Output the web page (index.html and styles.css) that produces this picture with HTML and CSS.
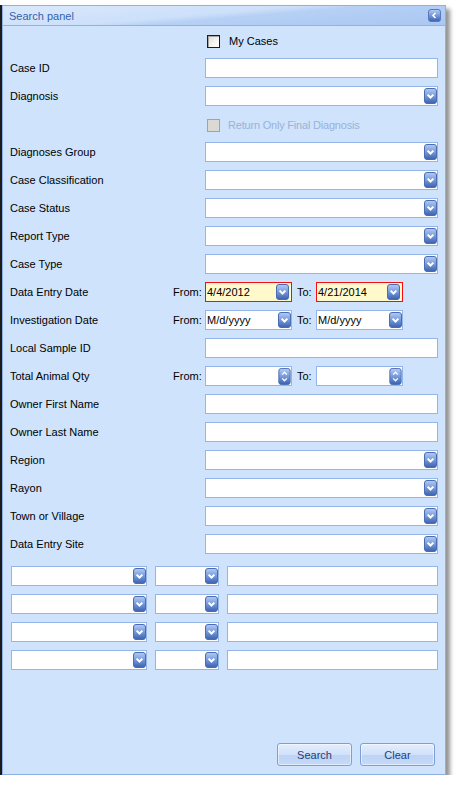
FILE: index.html
```html
<!DOCTYPE html>
<html>
<head>
<meta charset="utf-8">
<link rel="stylesheet" href="styles.css">
</head>
<body>
<svg class="defs" width="0" height="0" aria-hidden="true">
  <defs>
    <linearGradient id="btng" x1="0" y1="0" x2="0" y2="1">
      <stop offset="0" stop-color="#b4cbf3"/>
      <stop offset="0.45" stop-color="#7d9fdf"/>
      <stop offset="1" stop-color="#3a60b0"/>
    </linearGradient>
    <symbol id="dd" viewBox="0 0 13 16">
      <rect x="0.5" y="0.5" width="12" height="15" rx="2.5" fill="url(#btng)" stroke="#4a6cb0"/>
      <path d="M3.6 6.6l2.9 2.9 2.9-2.9" stroke="#fff" stroke-width="2" fill="none"/>
    </symbol>
    <symbol id="spin" viewBox="0 0 13 18">
      <rect x="0.5" y="0.5" width="12" height="17" rx="2.5" fill="url(#btng)" stroke="#4a6cb0"/>
      <path d="M4 7l2.5-2.5 2.5 2.5" stroke="#fff" stroke-width="1.4" fill="none"/>
      <path d="M4 11l2.5 2.5 2.5-2.5" stroke="#fff" stroke-width="1.4" fill="none"/>
    </symbol>
  </defs>
</svg>
<div class="frame">
  <div class="panel">
    <div class="header">
      <span class="title">Search panel</span>
      <svg class="collapse" width="13" height="13" viewBox="0 0 13 13">
        <rect x="0.5" y="0.5" width="12" height="12" rx="2.5" fill="url(#btng)" stroke="#5878b8"/>
        <path d="M7.5 4l-2.5 2.5 2.5 2.5" stroke="#fff" stroke-width="1.6" fill="none"/>
      </svg>
    </div>
    <div class="body">
      <div class="rows">
        <div class="row">
          <span class="lbl"></span>
          <div class="check"><span class="box"></span><span>My Cases</span></div>
        </div>
        <div class="row"><span class="lbl">Case ID</span><div class="txt"></div></div>
        <div class="row"><span class="lbl">Diagnosis</span><div class="combo"><svg class="dd"><use href="#dd"/></svg></div></div>
        <div class="row">
          <span class="lbl"></span>
          <div class="check disabled"><span class="box"></span><span>Return Only Final Diagnosis</span></div>
        </div>
        <div class="row"><span class="lbl">Diagnoses Group</span><div class="combo"><svg class="dd"><use href="#dd"/></svg></div></div>
        <div class="row"><span class="lbl">Case Classification</span><div class="combo"><svg class="dd"><use href="#dd"/></svg></div></div>
        <div class="row"><span class="lbl">Case Status</span><div class="combo"><svg class="dd"><use href="#dd"/></svg></div></div>
        <div class="row"><span class="lbl">Report Type</span><div class="combo"><svg class="dd"><use href="#dd"/></svg></div></div>
        <div class="row"><span class="lbl">Case Type</span><div class="combo"><svg class="dd"><use href="#dd"/></svg></div></div>
        <div class="row">
          <span class="lbl short">Data Entry Date</span>
          <span class="from">From:</span>
          <div class="combo small invalid"><span class="val">4/4/2012</span><svg class="dd"><use href="#dd"/></svg></div>
          <span class="to">To:</span>
          <div class="combo small invalid"><span class="val">4/21/2014</span><svg class="dd"><use href="#dd"/></svg></div>
        </div>
        <div class="row">
          <span class="lbl short">Investigation Date</span>
          <span class="from">From:</span>
          <div class="combo small"><span class="val">M/d/yyyy</span><svg class="dd"><use href="#dd"/></svg></div>
          <span class="to">To:</span>
          <div class="combo small"><span class="val">M/d/yyyy</span><svg class="dd"><use href="#dd"/></svg></div>
        </div>
        <div class="row"><span class="lbl">Local Sample ID</span><div class="txt"></div></div>
        <div class="row">
          <span class="lbl short">Total Animal Qty</span>
          <span class="from">From:</span>
          <div class="combo small"><span class="val"></span><svg class="sp"><use href="#spin"/></svg></div>
          <span class="to">To:</span>
          <div class="combo small"><span class="val"></span><svg class="sp"><use href="#spin"/></svg></div>
        </div>
        <div class="row"><span class="lbl">Owner First Name</span><div class="txt"></div></div>
        <div class="row"><span class="lbl">Owner Last Name</span><div class="txt"></div></div>
        <div class="row"><span class="lbl">Region</span><div class="combo"><svg class="dd"><use href="#dd"/></svg></div></div>
        <div class="row"><span class="lbl">Rayon</span><div class="combo"><svg class="dd"><use href="#dd"/></svg></div></div>
        <div class="row"><span class="lbl">Town or Village</span><div class="combo"><svg class="dd"><use href="#dd"/></svg></div></div>
        <div class="row"><span class="lbl">Data Entry Site</span><div class="combo"><svg class="dd"><use href="#dd"/></svg></div></div>
      </div>
      <div class="extra">
        <div class="combo c1"><svg class="dd"><use href="#dd"/></svg></div>
        <div class="combo c2"><svg class="dd"><use href="#dd"/></svg></div>
        <div class="txt c3"></div>
        <div class="combo c1"><svg class="dd"><use href="#dd"/></svg></div>
        <div class="combo c2"><svg class="dd"><use href="#dd"/></svg></div>
        <div class="txt c3"></div>
        <div class="combo c1"><svg class="dd"><use href="#dd"/></svg></div>
        <div class="combo c2"><svg class="dd"><use href="#dd"/></svg></div>
        <div class="txt c3"></div>
        <div class="combo c1"><svg class="dd"><use href="#dd"/></svg></div>
        <div class="combo c2"><svg class="dd"><use href="#dd"/></svg></div>
        <div class="txt c3"></div>
      </div>
      <div class="buttons">
        <button class="btn">Search</button>
        <button class="btn">Clear</button>
      </div>
    </div>
  </div>
</div>
</body>
</html>
```
FILE: styles.css
```css
html, body {
  margin: 0;
  padding: 0;
  background: #ffffff;
}
body {
  font-family: "Liberation Sans", Arial, sans-serif;
  font-size: 11px;
  color: #000;
}
.defs {
  position: absolute;
  width: 0;
  height: 0;
  overflow: hidden;
}
.frame {
  padding: 5px 0 0 2px;
}
.panel {
  width: 444px;
  height: 770px;
  box-sizing: border-box;
  border: 1px solid #8db0e6;
  background: #cfe4fc;
  display: flex;
  flex-direction: column;
  box-shadow: 4px 4px 4px rgba(60, 60, 60, 0.55), -2px 0 0 #1c1c1c;
}
.header {
  height: 19px;
  border-bottom: 1px solid #8fb2ea;
  background: linear-gradient(175deg, #d9e8fc 0%, #cde0fa 45%, #b6d0f5 55%, #aac7f2 100%);
  display: flex;
  align-items: center;
  justify-content: space-between;
  padding: 0 4px 0 6px;
}
.title {
  color: #3462ad;
  font-size: 11px;
}
.collapse {
  display: block;
  margin-top: 0;
}
.body {
  flex: 1;
  display: flex;
  flex-direction: column;
  padding: 4px 7px 7px 7px;
}
.rows {
  display: flex;
  flex-direction: column;
  gap: 8px;
}
.row {
  height: 20px;
  display: flex;
  align-items: center;
}
.lbl {
  width: 195px;
  flex: none;
}
.lbl.short {
  width: 163px;
}
.from {
  width: 32px;
  flex: none;
}
.to {
  width: 19px;
  margin-left: 5px;
  flex: none;
}
.txt, .combo {
  box-sizing: border-box;
  height: 20px;
  border: 1px solid #93b5ea;
  background: #fff;
}
.row > .txt, .row > .combo {
  flex: 1;
}
.combo {
  display: flex;
  align-items: center;
  justify-content: flex-end;
  padding-right: 0;
}
.row > .combo.small {
  flex: none;
  width: 87px;
  justify-content: space-between;
}
.val {
  padding-left: 1px;
  white-space: nowrap;
}
.combo.invalid {
  border-color: #f01010;
  background: #fff9cc;
}
.dd {
  width: 13px;
  height: 16px;
  display: block;
  flex: none;
}
.invalid .dd {
  margin-right: 2px;
}
.sp {
  width: 13px;
  height: 17px;
  display: block;
  flex: none;
}
.check {
  display: flex;
  align-items: center;
  gap: 9px;
  padding-left: 2px;
  margin-top: 2px;
}
.check .box {
  width: 13px;
  height: 13px;
  box-sizing: border-box;
  border: 1px solid #1c1c1c;
  background: linear-gradient(135deg, #dcdcd6 0%, #f6f6f3 60%, #ffffff 100%);
  box-shadow: inset 1px 1px 0 #a7a69f;
}
.check.disabled {
  color: #99b2d6;
  gap: 8px;
  letter-spacing: -0.2px;
}
.check.disabled .box {
  border-color: #a3a3a0;
  background: #dad9d3;
  box-shadow: none;
}
.extra {
  margin-top: 12px;
  margin-left: 1px;
  display: grid;
  grid-template-columns: 136px 64px 211px;
  grid-auto-rows: 20px;
  column-gap: 8px;
  row-gap: 8px;
}
.buttons {
  margin-top: auto;
  display: flex;
  justify-content: flex-end;
  gap: 8px;
  margin-right: 3px;
  margin-bottom: 1px;
}
.btn {
  width: 75px;
  height: 23px;
  box-sizing: border-box;
  border: 1px solid #7d9fd8;
  border-radius: 3px;
  background: linear-gradient(180deg, #e4eefc 0%, #d0e1f9 50%, #bcd3f5 51%, #c6daf7 100%);
  font-family: "Liberation Sans", Arial, sans-serif;
  font-size: 11px;
  color: #1e3d7c;
  padding: 0;
  box-shadow: inset 0 0 0 1px rgba(255, 255, 255, 0.5);
}
```
